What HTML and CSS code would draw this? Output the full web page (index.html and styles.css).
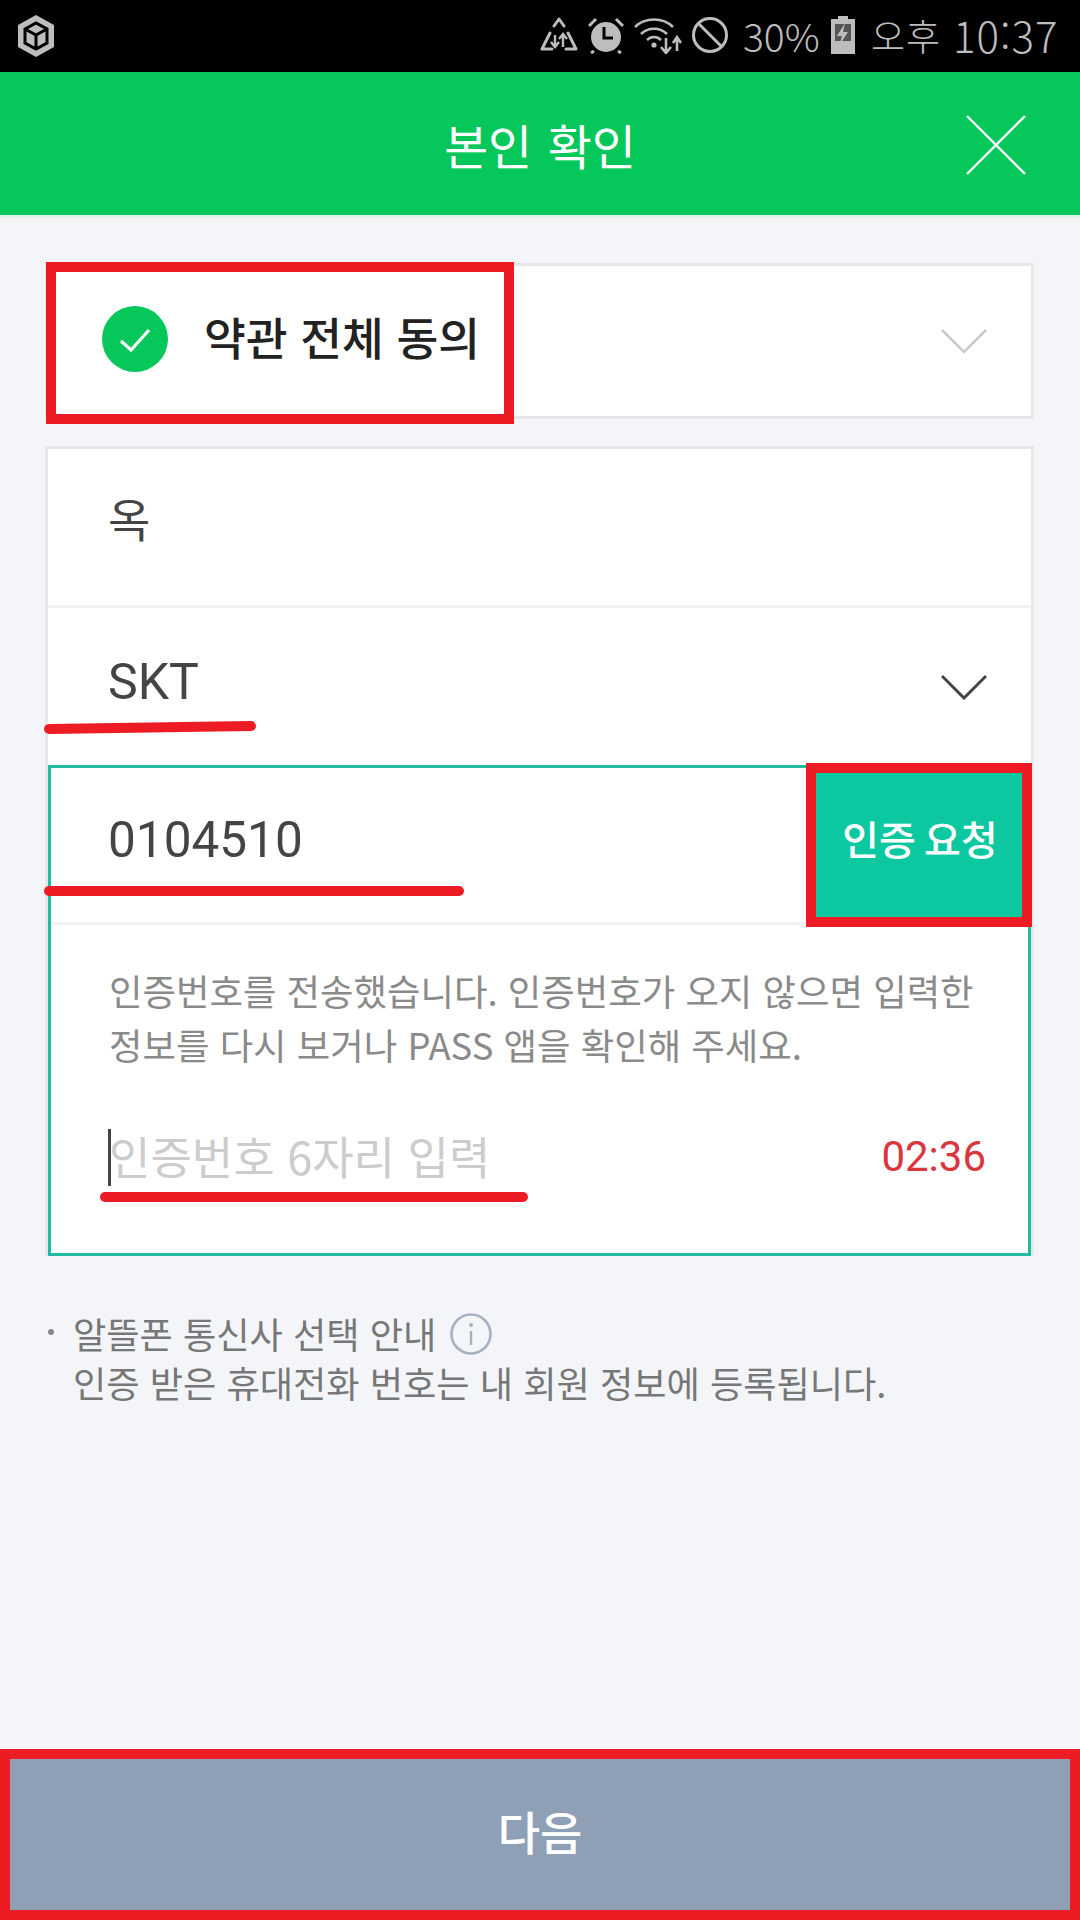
FILE: index.html
```html
<!DOCTYPE html>
<html lang="ko">
<head>
  <meta charset="UTF-8" />
  <title>본인 확인</title>
  <link rel="stylesheet" href="styles.css">
</head>
<body>

  <div class="status-bar">
    <svg class="st-app" viewBox="0 0 40 44" width="40" height="44">
      <path d="M20 1 L38 11 V33 L20 43 L2 33 V11 Z" fill="#bdbdbd"/>
      <path d="M9 15 L20 21 L31 15 M20 21 V35 M9 15 L20 9 L31 15 V29 L20 35 L9 29 Z" fill="none" stroke="#000" stroke-width="3"/>
    </svg>
    <div class="status-right">
      <svg class="st-icon" viewBox="0 0 38 36" width="38" height="36">
        <path d="M14 9 L19 2 L24 9 M10 16 L2 32 H12 M28 16 L36 32 H26" fill="none" stroke="#bdbdbd" stroke-width="3" stroke-linecap="round" stroke-linejoin="round"/>
        <path d="M15 18 V29 M11 25 L15 30 L19 25 M23 30 V18 M19 22 L23 17 L27 22" fill="none" stroke="#bdbdbd" stroke-width="2.4"/>
      </svg>
      <svg class="st-icon" viewBox="0 0 38 38" width="38" height="38">
        <circle cx="19" cy="21" r="15" fill="#bdbdbd"/>
        <path d="M17 11 V22 H26" fill="none" stroke="#000" stroke-width="3"/>
        <path d="M2 10 L9 3 M36 10 L29 3 M7 35 L4 37 M31 35 L34 37" fill="none" stroke="#bdbdbd" stroke-width="3"/>
      </svg>
      <svg class="st-icon" viewBox="0 0 48 38" width="48" height="38">
        <path d="M1 11 C11 1 29 1 39 11 M7 18 C14 11 26 11 33 18 M13 24 C17 20 23 20 27 24" fill="none" stroke="#bdbdbd" stroke-width="2.6"/>
        <circle cx="20" cy="29" r="2.6" fill="#bdbdbd"/>
        <path d="M32 22 V36 M27 31 L32 37 L37 31 M43 35 V22 M39 27 L43 21 L47 27" fill="none" stroke="#bdbdbd" stroke-width="2.6"/>
      </svg>
      <svg class="st-icon" viewBox="0 0 38 38" width="38" height="38">
        <circle cx="19" cy="19" r="16.5" fill="none" stroke="#bdbdbd" stroke-width="3"/>
        <path d="M7 7 L31 31" stroke="#bdbdbd" stroke-width="3"/>
      </svg>
      <span class="st-pct">30%</span>
      <svg class="st-batt" viewBox="0 0 24 38" width="24" height="38">
        <path d="M7 0 H17 V3 H24 V38 H0 V3 H7 Z" fill="#bdbdbd"/>
        <rect x="4" y="8" width="16" height="17" fill="#555"/>
        <path d="M14 7 L6 20 H11 L8 30 L17 16 H12 Z" fill="#bdbdbd"/>
      </svg>
      <span class="st-clock">오후</span>
      <span class="st-time">10:37</span>
    </div>
  </div>

  <header class="top-bar">
    <h1>본인 확인</h1>
    <button class="close-btn">
      <svg viewBox="0 0 60 60" width="60" height="60">
        <path d="M1 1 L59 59 M59 1 L1 59" stroke="#fff" stroke-width="2.4" fill="none"/>
      </svg>
    </button>
  </header>

  <main class="content">
    <section class="card agree-card">
      <div class="agree-mark">
        <svg class="check" viewBox="0 0 66 66" width="66" height="66">
          <circle cx="33" cy="33" r="33" fill="#05c75a"/>
          <path d="M19 35 L29 44 L47 24" fill="none" stroke="#fff" stroke-width="3.2"/>
        </svg>
        <span class="agree-text">약관 전체 동의</span>
      </div>
      <svg class="chevron" viewBox="0 0 46 26" width="46" height="26">
        <path d="M1 2 L23 24 L45 2" fill="none" stroke="#c9cccf" stroke-width="2.6"/>
      </svg>
    </section>

    <section class="card form-card">
      <div class="row name-row"><span class="value">옥</span></div>
      <div class="row carrier-row">
        <span class="value">SKT</span>
        <svg class="chevron" viewBox="0 0 46 26" width="46" height="26">
          <path d="M1 2 L23 24 L45 2" fill="none" stroke="#444" stroke-width="3"/>
        </svg>
      </div>
      <div class="verify-box">
        <div class="phone-row">
          <span class="value">0104510</span>
          <button class="request-btn">인증 요청</button>
        </div>
        <div class="code-area">
          <p class="notice">인증번호를 전송했습니다. 인증번호가 오지 않으면 입력한<br>정보를 다시 보거나 PASS 앱을 확인해 주세요.</p>
          <div class="code-row">
            <span class="placeholder">인증번호 6자리 입력</span>
            <span class="timer">02:36</span>
          </div>
        </div>
      </div>
    </section>

    <div class="guide">
      <p class="guide-line"><span class="guide-dot"></span>알뜰폰 통신사 선택 안내
        <svg class="info" viewBox="0 0 42 42" width="42" height="42">
          <circle cx="21" cy="21" r="19.5" fill="none" stroke="#a6b2c1" stroke-width="2.6"/>
          <circle cx="21" cy="12" r="2" fill="#a6b2c1"/>
          <path d="M21 18 V32" stroke="#a6b2c1" stroke-width="2.4"/>
        </svg>
      </p>
      <p class="guide-line">인증 받은 휴대전화 번호는 내 회원 정보에 등록됩니다.</p>
    </div>
  </main>

  <button class="next-btn">다음</button>

  <!-- 빨간 펜 밑줄 -->
  <svg class="marks" viewBox="0 0 1080 1920" width="1080" height="1920">
    <path d="M49 729 L251 726" />
    <path d="M49 891 L459 891" />
    <path d="M105 1197 L523 1197" />
  </svg>

</body>
</html>
```

FILE: styles.css
```css
* {
  box-sizing: border-box;
}

body {
  margin: 0;
  width: 1080px;
  height: 1920px;
  position: relative;
  display: flex;
  flex-direction: column;
  background-color: #f3f5f9;
  font-family: 'Roboto', 'Noto Sans CJK KR', sans-serif;
  overflow: hidden;
}

button {
  font-family: inherit;
  cursor: pointer;
}

p {
  margin: 0;
}

.status-bar {
  height: 72px;
  background-color: #000;
  display: flex;
  align-items: center;
  justify-content: space-between;
  padding: 0 23px 0 16px;
  color: #bdbdbd;
}

.status-right {
  display: flex;
  align-items: center;
  margin-top: -2px;
}

.st-icon {
  margin-left: 9px;
  flex: none;
}

.st-icon:first-child {
  margin-left: 0;
}

.st-pct {
  font-family: 'Noto Sans CJK KR', sans-serif;
  font-weight: 300;
  font-size: 39px;
  line-height: 1;
  margin-left: 14px;
  width: 75px;
  white-space: nowrap;
}

.st-batt {
  margin-left: 13px;
}

.st-clock {
  font-family: 'Noto Sans CJK KR', sans-serif;
  font-weight: 300;
  font-size: 37px;
  line-height: 1;
  margin-left: 16px;
  letter-spacing: 1px;
  width: 82px;
}

.st-time {
  font-family: 'Noto Sans CJK KR', sans-serif;
  font-weight: 300;
  font-size: 42px;
  line-height: 1;
  letter-spacing: 1px;
  width: 104px;
}

.top-bar {
  height: 146px;
  background-color: #05c75a;
  border-bottom: 3px solid #dff3e8;
  display: flex;
  align-items: center;
  justify-content: center;
  position: relative;
}

.top-bar h1 {
  margin: 0;
  color: #fff;
  font-family: 'Noto Sans CJK KR', sans-serif;
  font-weight: 400;
  font-size: 48px;
  word-spacing: 2px;
}

.close-btn {
  position: absolute;
  right: 54px;
  top: 43px;
  padding: 0;
  border: 0;
  background: none;
  display: flex;
}

.content {
  flex: 1;
  padding: 45px 46px 0 45px;
}

.card {
  background-color: #fff;
  border: 3px solid #e6e7e9;
}

.agree-card {
  height: 156px;
  display: flex;
  align-items: center;
  justify-content: space-between;
  padding-right: 44px;
}

.agree-mark {
  width: 468px;
  height: 162px;
  margin: -4px 0 -8px -2px;
  border: 10px solid #ed1c24;
  display: flex;
  align-items: center;
  gap: 36px;
  padding-left: 46px;
  flex: none;
}

.check {
  flex: none;
  margin-top: -8px;
}

.agree-text {
  font-family: 'Noto Sans CJK KR', sans-serif;
  font-weight: 500;
  font-size: 45.4px;
  color: #222;
  white-space: nowrap;
  margin-top: -14px;
}

.form-card {
  margin-top: 27px;
  height: 810px;
  display: flex;
  flex-direction: column;
}

.row {
  height: 159px;
  padding: 0 44px 0 60px;
  display: flex;
  align-items: center;
  justify-content: space-between;
  border-bottom: 3px solid #f2f2f3;
}

.carrier-row {
  border-bottom: 0;
  height: 157px;
}

.value {
  font-size: 50px;
  color: #444;
  font-family: 'Roboto', 'Noto Sans CJK KR', sans-serif;
  margin-top: -10px;
}

.name-row .value {
  font-size: 46px;
  margin-top: -20px;
}

.verify-box {
  flex: 1;
  border: 3px solid #1fbc9f;
  margin-bottom: -3px;
}

.phone-row {
  height: 157px;
  display: flex;
  align-items: center;
  justify-content: space-between;
  padding-left: 57px;
  border-bottom: 3px solid #f2f2f3;
}

.phone-row .value {
  font-size: 49.5px;
}

.request-btn {
  width: 226px;
  height: 164px;
  margin: -5px -4px -5px 0;
  border: 10px solid #ed1c24;
  background-color: #0cc8a0;
  color: #fff;
  font-family: 'Noto Sans CJK KR', sans-serif;
  font-weight: 500;
  font-size: 40px;
  word-spacing: -3px;
  padding: 0 0 14px 2px;
}

.code-area {
  padding: 38px 42px 0 58px;
}

.notice {
  font-family: 'Noto Sans CJK KR', sans-serif;
  font-size: 36.4px;
  line-height: 54px;
  color: #8a8a8a;
  white-space: nowrap;
}

.code-row {
  margin-top: 56px;
  display: flex;
  align-items: center;
  justify-content: space-between;
}

.placeholder {
  font-family: 'Noto Sans CJK KR', sans-serif;
  font-size: 45px;
  line-height: 58px;
  color: #cccccc;
  position: relative;
  white-space: nowrap;
}

/* 입력 커서 */
.placeholder::before {
  content: "";
  position: absolute;
  left: -1px;
  top: 2px;
  width: 3px;
  height: 57px;
  background-color: #444;
}

.timer {
  font-size: 42px;
  color: #d9363e;
}

.guide {
  margin-top: 53px;
  padding-left: 28px;
  color: #777;
  font-family: 'Noto Sans CJK KR', sans-serif;
  font-size: 36.2px;
  line-height: 49px;
  white-space: nowrap;
}

.guide-line {
  position: relative;
  display: flex;
  align-items: center;
  gap: 14px;
}

.guide-dot {
  position: absolute;
  left: -25px;
  top: 20px;
  width: 6px;
  height: 6px;
  border-radius: 50%;
  background-color: #888;
}

.info {
  flex: none;
}

.next-btn {
  width: 100%;
  height: 171px;
  border: 10px solid #ed1c24;
  background-color: #8f9fb5;
  color: #fff;
  font-family: 'Noto Sans CJK KR', sans-serif;
  font-weight: 500;
  font-size: 46px;
  padding: 0 0 10px;
  flex: none;
}

.marks {
  position: absolute;
  left: 0;
  top: 0;
  pointer-events: none;
  fill: none;
  stroke: #ed1c24;
  stroke-width: 10;
  stroke-linecap: round;
}
```
